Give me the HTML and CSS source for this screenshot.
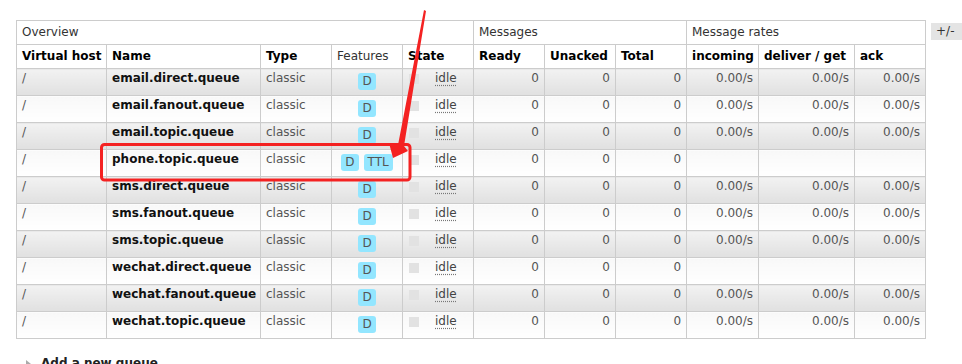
FILE: index.html
```
<!DOCTYPE html>
<html>
<head>
<meta charset="utf-8">
<link rel="stylesheet" href="styles.css">
</head>
<body>
<div class="page">
  <div class="toprow">
    <table class="list">
      <colgroup>
        <col style="width:90px"><col style="width:154px"><col style="width:71px"><col style="width:71px"><col style="width:71px">
        <col style="width:71px"><col style="width:71px"><col style="width:71px">
        <col style="width:72px"><col style="width:96px"><col style="width:71px">
      </colgroup>
      <thead>
        <tr class="group">
          <th colspan="5">Overview</th>
          <th colspan="3">Messages</th>
          <th colspan="3">Message rates</th>
        </tr>
        <tr class="heads">
          <th>Virtual host</th><th>Name</th><th>Type</th><th class="plain">Features</th><th>State</th>
          <th>Ready</th><th>Unacked</th><th>Total</th>
          <th>incoming</th><th>deliver / get</th><th>ack</th>
        </tr>
      </thead>
      <tbody>
        <tr class="alt1"><td>/</td><td class="name">email.direct.queue</td><td>classic</td><td><div class="badges"><span class="badge">D</span></div></td><td><div class="state"><span class="key"></span><abbr>idle</abbr></div></td><td class="num">0</td><td class="num">0</td><td class="num">0</td><td class="num">0.00/s</td><td class="num">0.00/s</td><td class="num">0.00/s</td></tr>
        <tr class="alt2"><td>/</td><td class="name">email.fanout.queue</td><td>classic</td><td><div class="badges"><span class="badge">D</span></div></td><td><div class="state"><span class="key"></span><abbr>idle</abbr></div></td><td class="num">0</td><td class="num">0</td><td class="num">0</td><td class="num">0.00/s</td><td class="num">0.00/s</td><td class="num">0.00/s</td></tr>
        <tr class="alt1"><td>/</td><td class="name">email.topic.queue</td><td>classic</td><td><div class="badges"><span class="badge">D</span></div></td><td><div class="state"><span class="key"></span><abbr>idle</abbr></div></td><td class="num">0</td><td class="num">0</td><td class="num">0</td><td class="num">0.00/s</td><td class="num">0.00/s</td><td class="num">0.00/s</td></tr>
        <tr class="alt2"><td>/</td><td class="name">phone.topic.queue</td><td>classic</td><td><div class="badges"><span class="badge">D</span><span class="badge">TTL</span></div></td><td><div class="state"><span class="key"></span><abbr>idle</abbr></div></td><td class="num">0</td><td class="num">0</td><td class="num">0</td><td class="num"></td><td class="num"></td><td class="num"></td></tr>
        <tr class="alt1"><td>/</td><td class="name">sms.direct.queue</td><td>classic</td><td><div class="badges"><span class="badge">D</span></div></td><td><div class="state"><span class="key"></span><abbr>idle</abbr></div></td><td class="num">0</td><td class="num">0</td><td class="num">0</td><td class="num">0.00/s</td><td class="num">0.00/s</td><td class="num">0.00/s</td></tr>
        <tr class="alt2"><td>/</td><td class="name">sms.fanout.queue</td><td>classic</td><td><div class="badges"><span class="badge">D</span></div></td><td><div class="state"><span class="key"></span><abbr>idle</abbr></div></td><td class="num">0</td><td class="num">0</td><td class="num">0</td><td class="num">0.00/s</td><td class="num">0.00/s</td><td class="num">0.00/s</td></tr>
        <tr class="alt1"><td>/</td><td class="name">sms.topic.queue</td><td>classic</td><td><div class="badges"><span class="badge">D</span></div></td><td><div class="state"><span class="key"></span><abbr>idle</abbr></div></td><td class="num">0</td><td class="num">0</td><td class="num">0</td><td class="num">0.00/s</td><td class="num">0.00/s</td><td class="num">0.00/s</td></tr>
        <tr class="alt2"><td>/</td><td class="name">wechat.direct.queue</td><td>classic</td><td><div class="badges"><span class="badge">D</span></div></td><td><div class="state"><span class="key"></span><abbr>idle</abbr></div></td><td class="num">0</td><td class="num">0</td><td class="num">0</td><td class="num"></td><td class="num"></td><td class="num"></td></tr>
        <tr class="alt1"><td>/</td><td class="name">wechat.fanout.queue</td><td>classic</td><td><div class="badges"><span class="badge">D</span></div></td><td><div class="state"><span class="key"></span><abbr>idle</abbr></div></td><td class="num">0</td><td class="num">0</td><td class="num">0</td><td class="num">0.00/s</td><td class="num">0.00/s</td><td class="num">0.00/s</td></tr>
        <tr class="alt2"><td>/</td><td class="name">wechat.topic.queue</td><td>classic</td><td><div class="badges"><span class="badge">D</span></div></td><td><div class="state"><span class="key"></span><abbr>idle</abbr></div></td><td class="num">0</td><td class="num">0</td><td class="num">0</td><td class="num">0.00/s</td><td class="num">0.00/s</td><td class="num">0.00/s</td></tr>
      </tbody>
    </table>
    <span class="toggle">+/-</span>
  </div>
  <div class="add"><span class="tri"></span>Add a new queue</div>
  <svg class="annot" width="962" height="364" viewBox="0 0 962 364">
    <rect x="101.5" y="144.5" width="308.5" height="35.5" rx="3" ry="3" fill="none" stroke="#f42222" stroke-width="3"/>
    <polygon points="424,10 426,11 404,146 408,151 393,158 389,143 398,145" fill="#f42222"/>
  </svg>
</div>
</body>
</html>
```
FILE: styles.css
```
html, body {
  margin: 0;
  padding: 0;
  background: #fff;
  overflow: hidden;
}
body {
  font-family: "DejaVu Sans", Verdana, sans-serif;
  font-size: 12px;
  color: #484848;
}
.page {
  position: relative;
  width: 962px;
  height: 364px;
  padding: 20px 0 0 16px;
  box-sizing: border-box;
  overflow: hidden;
}
.toprow {
  display: flex;
  align-items: flex-start;
}
table.list {
  border-collapse: collapse;
  table-layout: fixed;
  width: 910px;
}
table.list th,
table.list td {
  border: 1px solid #ccc;
  line-height: 15px;
  text-align: left;
  vertical-align: top;
  white-space: nowrap;
}
table.list th {
  padding: 4px 5px;
  color: #000;
  font-weight: bold;
  background: #fff;
}
table.list tr.group th {
  font-weight: normal;
  color: #333;
}
table.list th.plain {
  font-weight: normal;
  color: #333;
}
table.list td {
  padding: 2px 5px 9px 5px;
  color: #555;
}
tr.alt1 td {
  background: linear-gradient(to bottom, #f2f2f2 0%, #e0e0e0 100%);
}
tr.alt2 td {
  background: linear-gradient(to bottom, #f8f8f8 0%, #ffffff 100%);
}
td.name {
  font-weight: bold;
  color: #111 !important;
}
td.num {
  text-align: right !important;
}
.badges {
  height: 15px;
  display: flex;
  justify-content: center;
  align-items: flex-start;
  gap: 5px;
}
.badge {
  display: block;
  flex: none;
  margin-top: 2px;
  height: 17px;
  background: #93e6ff;
  color: #555;
  border-radius: 3px;
  padding: 0 4px;
  line-height: 17px;
}
.state {
  height: 15px;
  display: flex;
  align-items: flex-start;
}
.key {
  flex: none;
  width: 10px;
  height: 10px;
  background: #e2e2e2;
  margin: 3px 16px 0 1px;
}
abbr {
  color: #444;
  text-decoration: underline dotted #777;
  text-underline-offset: 3px;
}
.toggle {
  margin: 3px 0 0 5px;
  padding: 1px 8px 1px 5px;
  background: #e4e4e4;
  color: #333;
  line-height: 15px;
}
.add {
  display: flex;
  align-items: center;
  margin: 17px 0 0 10px;
  font-weight: bold;
  color: #222;
  font-size: 12px;
  line-height: 15px;
}
.tri {
  width: 0;
  height: 0;
  border-left: 5px solid #aaa;
  border-top: 4px solid transparent;
  border-bottom: 4px solid transparent;
  margin-right: 10px;
}
.annot {
  position: absolute;
  left: 0;
  top: 0;
  pointer-events: none;
}
```
